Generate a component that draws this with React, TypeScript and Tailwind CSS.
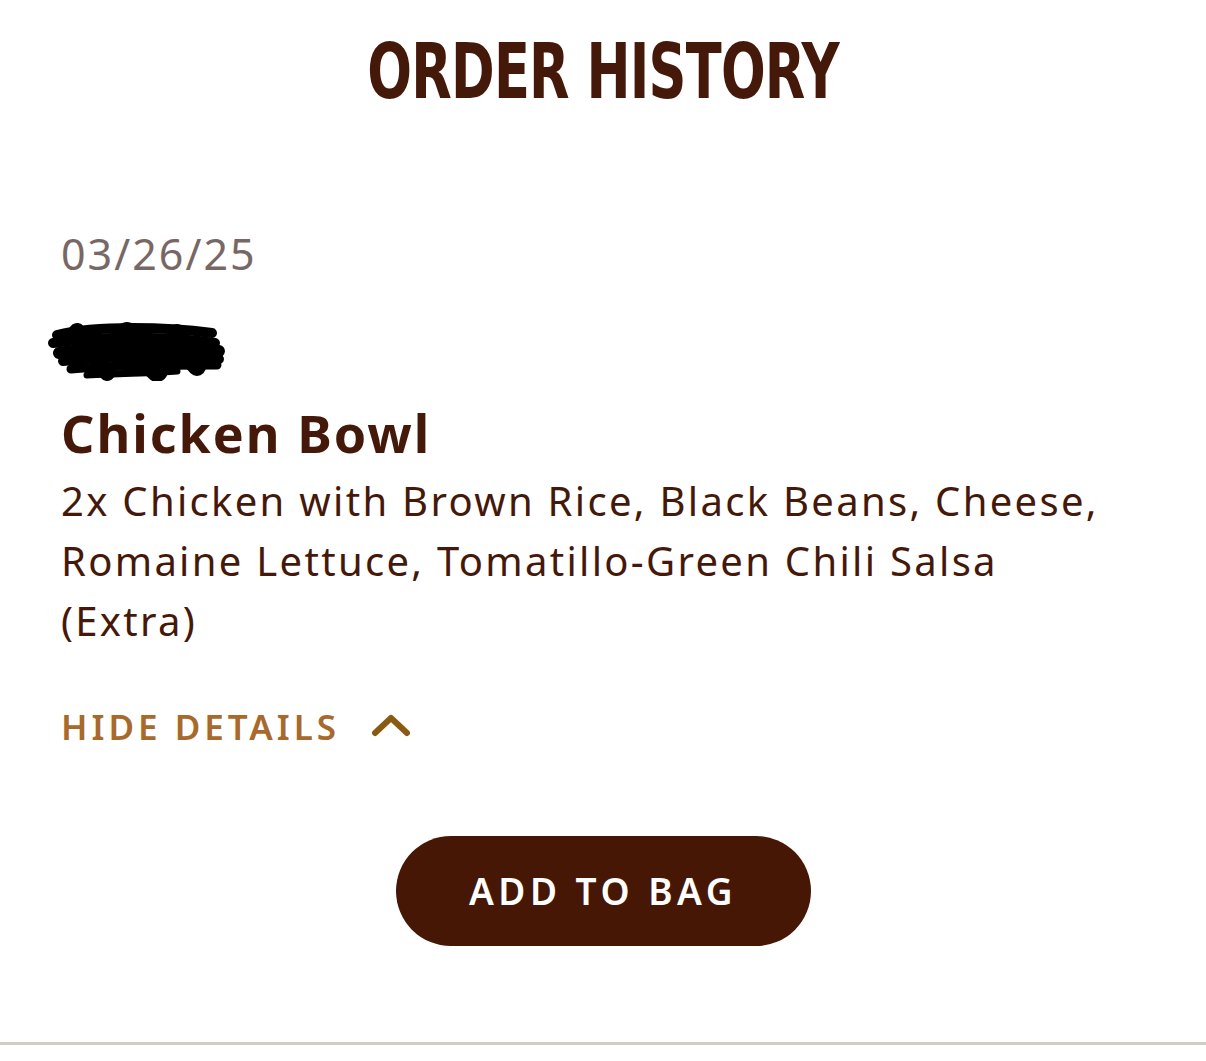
function Scribble() {
	return (
		<svg width="180" height="60" viewBox="0 0 180 60" className="block">
			<g fill="none" stroke="#000" strokeLinecap="round" strokeLinejoin="round">
				<path d="M10 14 C 50 4, 120 6, 165 12" strokeWidth="10" />
				<path d="M6 22 C 60 14, 130 16, 168 22" strokeWidth="10" />
				<path d="M12 32 C 60 24, 130 26, 172 30" strokeWidth="12" />
				<path d="M16 40 C 70 34, 130 36, 172 38" strokeWidth="10" />
				<path d="M24 48 C 70 44, 120 44, 170 44" strokeWidth="9" />
				<path d="M40 54 C 80 52, 110 52, 130 50" strokeWidth="7" />
				<path d="M30 10 C 40 24, 50 40, 60 52" strokeWidth="16" />
				<path d="M80 12 C 90 26, 100 40, 110 50" strokeWidth="22" />
				<path d="M130 12 C 135 24, 140 36, 150 46" strokeWidth="18" />
			</g>
		</svg>
	);
}

export default function App() {
	return (
		<div className="min-h-screen bg-white flex flex-col" style={{ fontFamily: '"Noto Sans", sans-serif' }}>
			<h1
				className="text-center text-[#45190a] font-bold text-[77px] leading-none tracking-[-1px] pt-[33px] scale-x-[0.76] origin-center"
				style={{ fontFamily: '"DejaVu Sans Condensed", "DejaVu Sans", sans-serif' }}
			>
				ORDER HISTORY
			</h1>
			<div className="px-[61px] pt-[122px] flex flex-col">
				<div className="text-[43px] leading-none tracking-[2px] text-[#786865]">03/26/25</div>
				<div className="mt-[46px] -ml-[14px]">
					<Scribble />
				</div>
				<div className="mt-[26px] text-[52px] leading-none font-bold tracking-[2px] text-[#45190a]">
					Chicken Bowl
				</div>
				<p className="mt-[12px] text-[40px] leading-[60px] tracking-[2.3px] text-[#45190a] max-w-[1060px]">
					2x Chicken with Brown Rice, Black Beans, Cheese, Romaine Lettuce, Tomatillo-Green Chili Salsa (Extra)
				</p>
				<button className="mt-[58px] flex flex-row items-center gap-[32px] self-start">
					<span className="text-[35px] leading-none font-semibold tracking-[4px] text-[#a86a2c]">HIDE DETAILS</span>
					<svg width="38" height="24" viewBox="0 0 38 24" className="-mt-[4px]">
						<polyline
							points="3,20 19,5 35,20"
							fill="none"
							stroke="#8a5a12"
							strokeWidth="6"
							strokeLinecap="round"
							strokeLinejoin="round"
						/>
					</svg>
				</button>
			</div>
			<div className="flex justify-center mt-[92px]">
				<button className="w-[415px] h-[110px] rounded-full bg-[#451704] text-white text-[37px] font-semibold tracking-[4.5px]">
					ADD TO BAG
				</button>
			</div>
			<div className="mt-auto mb-[16px] h-[3px] bg-[#d4cdc6]" />
		</div>
	);
}
